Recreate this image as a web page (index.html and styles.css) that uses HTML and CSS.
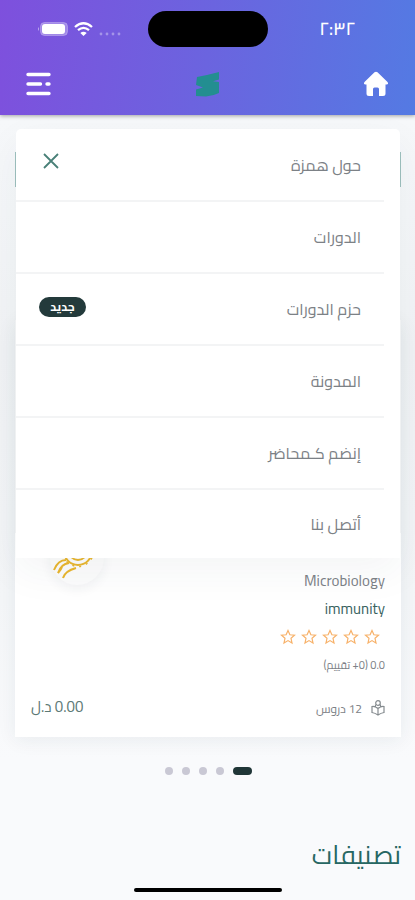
FILE: index.html
```html
<!DOCTYPE html>
<html lang="ar" dir="rtl">
<head>
<meta charset="utf-8">
<meta name="viewport" content="width=device-width, initial-scale=1">
<title>همزة</title>
<link rel="stylesheet" href="styles.css">
</head>
<body>
<header class="header">
  <div class="status">
    <span class="time">٢:٣٢</span>
    <span class="island"></span>
    <span class="signals">
      <svg width="22" height="4" viewBox="0 0 22 4" fill="#fff" opacity=".35"><circle cx="2" cy="2" r="1.4"/><circle cx="8" cy="2" r="1.4"/><circle cx="14" cy="2" r="1.4"/><circle cx="20" cy="2" r="1.4"/></svg>
      <svg class="wifi" width="19" height="14" viewBox="0 0 19 14" fill="none" stroke="#fff" stroke-width="2.3"><path d="M1 5Q9.500-2.500 18 5M4 8.200Q9.500 3.500 15 8.200"/><path d="M6.300 11Q9.500 8.600 12.700 11L9.500 14Z" fill="#fff" stroke="none"/></svg>
      <svg width="31" height="14" viewBox="0 0 31 14"><rect x="3.500" y=".5" width="27" height="13" rx="4" fill="#fff" fill-opacity=".3" stroke="#fff" stroke-opacity=".25"/><rect x="5" y="2" width="23" height="10" rx="3" fill="#fff"/><path d="M2 5Q0 7 2 9Z" fill="#fff" opacity=".5"/></svg>
    </span>
  </div>
  <nav class="bar">
    <a class="home" href="#" aria-label="الرئيسية"><svg width="26" height="26" viewBox="0 0 26 26" fill="#fff"><path d="M11.500 1.300Q13 0 14.500 1.300L24.500 11Q26 13.200 23.500 13.500H22.500V22.500Q22.500 25 20 25H16V18Q16 16.500 14.500 16.500H11.500Q10 16.500 10 18V25H6Q3.500 25 3.500 22.500V13.500H2.500Q0 13.200 1.500 11Z"/></svg></a>
    <a class="logo" href="#" aria-label="همزة"><svg width="24" height="25" viewBox="0 0 24 25" fill="#238e91"><path d="M1 5Q12 3 23 0V7.500L17 9.300L23 10V21Q17 24 10 24.500L0 24V17.500L7 15.500L0 13Z"/></svg></a>
    <button class="toggle" type="button" aria-label="القائمة"><svg width="25" height="24" viewBox="0 0 25 24" stroke="#fff" stroke-width="3.400" stroke-linecap="round"><path d="M2 2.500H23M2 12H14.500M21 12H23M2 21.500H23"/></svg></button>
  </nav>
  <nav class="menu">
    <div class="item"><a href="#">حول همزة</a><button class="close" type="button" aria-label="إغلاق"><svg width="16" height="16" viewBox="0 0 16 16" stroke="#498078" stroke-width="1.800"><path d="M1 1L15 15M15 1L1 15"/></svg></button></div>
    <div class="item"><a href="#">الدورات</a></div>
    <div class="item"><a href="#">حزم الدورات</a><span class="badge">جديد</span></div>
    <div class="item"><a href="#">المدونة</a></div>
    <div class="item"><a href="#">إنضم كـمحاضر</a></div>
    <div class="item"><a href="#">أتصل بنا</a></div>
  </nav>
</header>
<main class="main">
  <div class="frame"></div>
  <article class="card">
    <div class="cover"></div>
    <div class="award"><svg width="42" height="42" viewBox="0 0 42 42" fill="none" stroke="#e9b62e" stroke-width="2"><circle cx="22" cy="14" r="9"/><circle cx="22" cy="14" r="14"/><circle cx="22" cy="14" r="15.500" stroke-width="1.500" stroke-dasharray="2 5"/><path d="M-2 33Q2 23 10 23M2 36Q5 27 13 26M7 41Q9 34 20 31M2 36Q5 33 6 30"/></svg></div>
    <div class="info">
      <p class="category" dir="ltr">Microbiology</p>
      <h3 class="title" dir="ltr">immunity</h3>
      <div class="stars">
        <svg viewBox="0 0 16 16"><path d="M8 1.500L9.900 5.800L14.500 6.200L11 9.300L12 14L8 11.600L4 14L5 9.300L1.500 6.200L6.100 5.800Z"/></svg>
        <svg viewBox="0 0 16 16"><path d="M8 1.500L9.900 5.800L14.500 6.200L11 9.300L12 14L8 11.600L4 14L5 9.300L1.500 6.200L6.100 5.800Z"/></svg>
        <svg viewBox="0 0 16 16"><path d="M8 1.500L9.900 5.800L14.500 6.200L11 9.300L12 14L8 11.600L4 14L5 9.300L1.500 6.200L6.100 5.800Z"/></svg>
        <svg viewBox="0 0 16 16"><path d="M8 1.500L9.900 5.800L14.500 6.200L11 9.300L12 14L8 11.600L4 14L5 9.300L1.500 6.200L6.100 5.800Z"/></svg>
        <svg viewBox="0 0 16 16"><path d="M8 1.500L9.900 5.800L14.500 6.200L11 9.300L12 14L8 11.600L4 14L5 9.300L1.500 6.200L6.100 5.800Z"/></svg>
      </div>
      <p class="rating">0.0 <bdi>(0+ تقييم)</bdi></p>
      <div class="foot">
        <span class="lessons"><svg width="14" height="16" viewBox="0 0 14 16" fill="none" stroke="#858b8f" stroke-width="1.200"><circle cx="7" cy="3" r="2.300"/><path d="M7 8.500Q4 6 1 6.500V12.500Q4 13 7 15Q10 13 13 12.500V6.500Q10 6 7 8.500V15M4.500 4.500V7M9.500 4.500V7"/></svg>12 دروس</span>
        <span class="price">0.00 د.ل</span>
      </div>
    </div>
  </article>
  <div class="pager"><span class="dot active"></span><span class="dot"></span><span class="dot"></span><span class="dot"></span><span class="dot"></span></div>
  <h2 class="heading">تصنيفات</h2>
</main>
<div class="indicator"></div>
</body>
</html>
```
FILE: styles.css
```css
* { box-sizing: border-box; }
body { margin: 0; min-height: 100vh; overflow-x: hidden; background: linear-gradient(#f6f8fa 120px, #f1f3f5 350px, #f4f6f8 600px, #f9fafc 760px); font-family: Cairo, "Noto Sans Arabic", "Noto Kufi Arabic", "Open Sans", "DejaVu Sans", sans-serif; color: #7c8186; }
a { color: inherit; text-decoration: none; }
button { padding: 0; border: 0; background: none; cursor: pointer; }
svg { display: block; }
p, h2, h3 { margin: 0; font-weight: 400; }
.header { position: relative; z-index: 2; height: 115px; background: linear-gradient(96deg, #7e50dd, #6b64df 50%, #547ae3); box-shadow: 0 1px 4px rgba(0, 0, 0, .35); }
.status { display: grid; grid-template-columns: 1fr 120px 1fr; align-items: center; padding-top: 11px; }
.time { justify-self: center; padding-right: 8px; color: #fff; font-size: 18px; font-weight: 600; line-height: 24px; }
.island { height: 36px; border-radius: 18px; background: #000; }
.signals { display: flex; align-items: center; justify-content: flex-start; gap: 6px; padding-right: 27px; }
.signals svg:first-child { margin-top: 10px; }
.bar { display: grid; grid-template-columns: 1fr auto 1fr; align-items: center; padding: 24px 26px 0; }
.toggle { justify-self: end; }
.menu { position: absolute; top: 129px; left: 16px; right: 15px; padding-top: 1px; border-radius: 5px 5px 0 0; background: #fff; box-shadow: 0 14px 40px rgba(30, 50, 70, .05); }
.item { display: flex; align-items: center; justify-content: space-between; height: 72px; margin-right: 16px; padding: 0 23px; border-bottom: 2px solid #f3f4f5; font-size: 16px; line-height: 28px; }
.item:last-child { height: 68px; border: 0; }
.close { margin: 0 0 8px 4px; }
.badge { width: 47px; height: 20px; margin-bottom: 4px; border-radius: 10px; background: #233a3b; color: #fff; font-size: 12px; font-weight: 700; line-height: 19px; text-align: center; }
.main { padding: 37px 14px 0 15px; }
.frame { height: 35px; border: solid #9dbfbd; border-width: 0 1px; }
.card { margin: 133px 0 0; background: #fff; box-shadow: 0 3px 18px rgba(30, 50, 70, .07); }
.cover { height: 213px; background: #f5f6f7; }
.award { display: grid; place-items: center; width: 54px; height: 54px; margin: -2px auto 0 35px; border-radius: 50%; background: #fcfcfc; box-shadow: 0 4px 12px rgba(30, 50, 70, .06); }
.award svg { overflow: visible; }
.info { padding: 0 16px 15px; margin-top: -18px; }
.category, .title { font-size: 15px; line-height: 28px; text-align: right; }
.title { color: #38625e; }
.stars { display: flex; gap: 5px; padding: 6px 5px; }
.stars svg { width: 16px; height: 16px; fill: none; stroke: #f7b169; stroke-width: 1.2; }
.rating { font-size: 11px; line-height: 28px; }
.foot { display: flex; align-items: center; justify-content: space-between; height: 28px; margin-top: 15px; }
.lessons { display: flex; align-items: center; gap: 9px; font-size: 12px; }
.price { margin-bottom: 3px; color: #5c7975; font-size: 15px; }
.pager { display: flex; align-items: center; justify-content: center; gap: 9px; margin-top: 30px; }
.dot { width: 8px; height: 8px; border-radius: 4px; background: #c9c8d4; }
.active { width: 19px; background: #203637; }
.heading { margin-top: 60px; color: #276763; font-size: 26px; line-height: 40px; }
.indicator { position: fixed; z-index: 3; bottom: 8px; left: 50%; width: 148px; height: 4px; margin-left: -74px; border-radius: 2px; background: #000; }
```
